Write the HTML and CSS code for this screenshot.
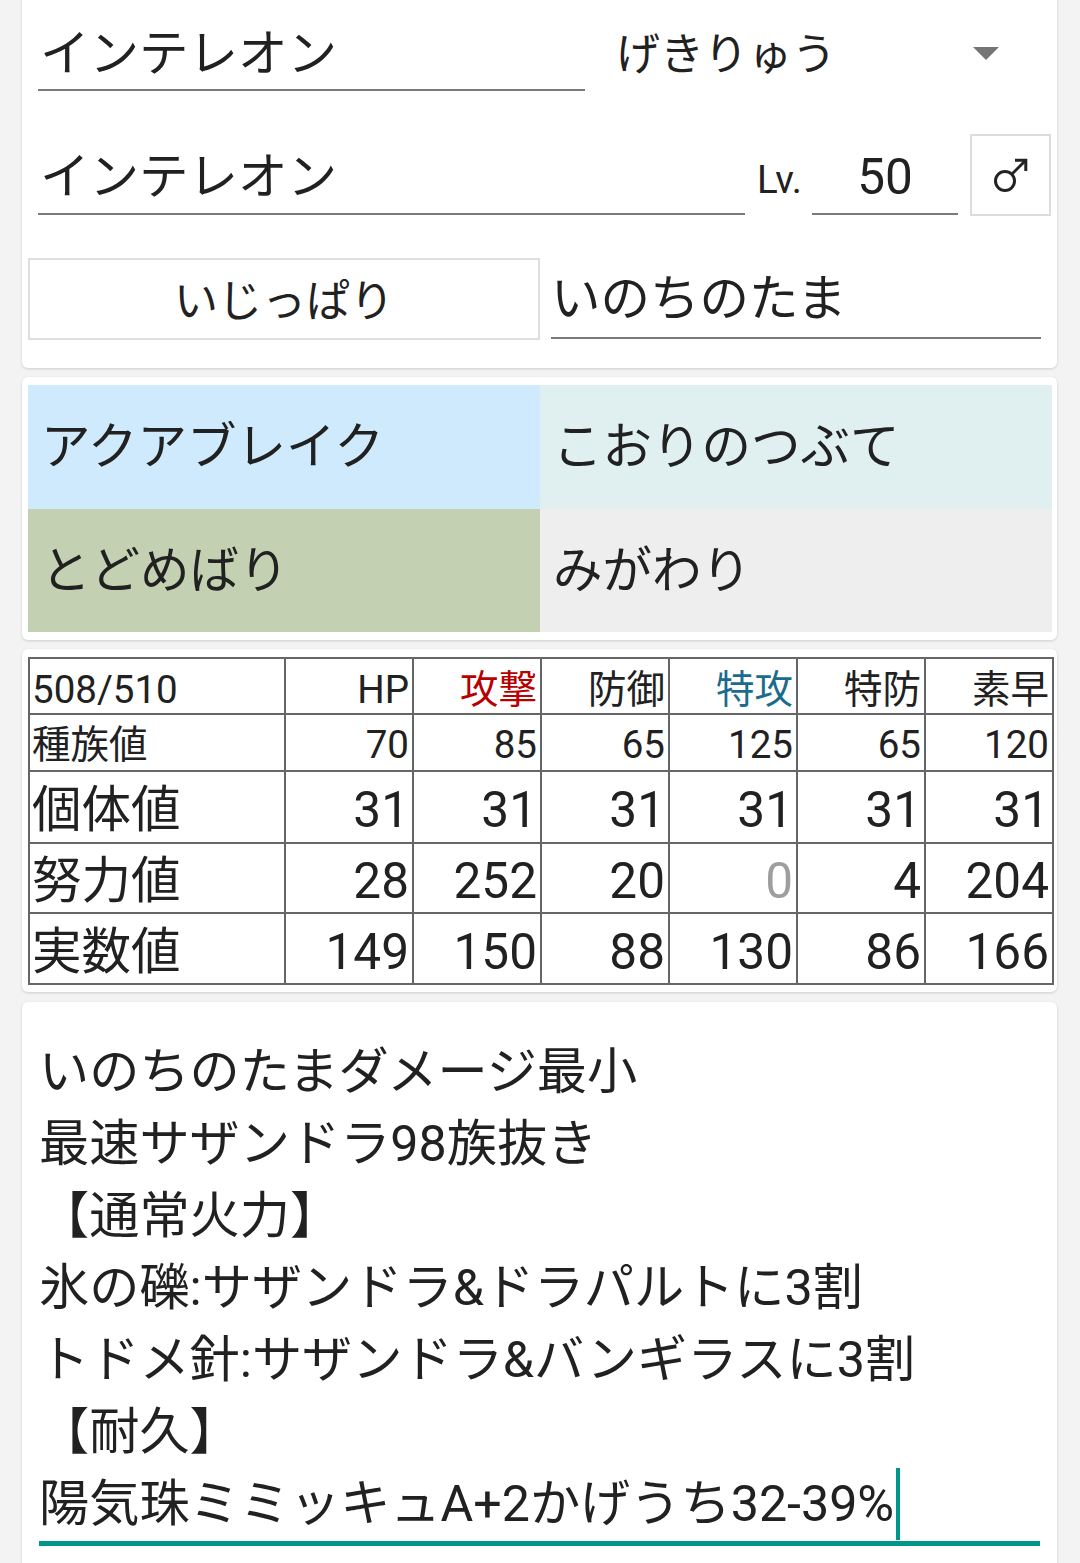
FILE: index.html
```html
<!DOCTYPE html>
<html lang="ja">
<head>
<meta charset="utf-8">
<title>インテレオン</title>
<link rel="stylesheet" href="styles.css">
</head>
<body>
<div class="card card-top">
  <div class="row row1">
    <div class="field name1">インテレオン</div>
    <div class="select">
      <span class="select-text">げきりゅう</span>
      <span class="arrow"></span>
    </div>
  </div>
  <div class="row row2">
    <div class="field name2">インテレオン</div>
    <div class="lv">Lv.</div>
    <div class="field level">50</div>
    <div class="gender">
      <svg width="36" height="36" viewBox="0 0 36 36" fill="none" stroke="#222" stroke-width="3">
        <circle cx="12" cy="24" r="9.5"/>
        <path d="M18.8 17.2 L33 3"/>
        <path d="M22 3.2 H32.8 V14"/>
      </svg>
    </div>
  </div>
  <div class="row row3">
    <div class="nature">いじっぱり</div>
    <div class="field item">いのちのたま</div>
  </div>
</div>

<div class="card card-moves">
  <div class="moves">
    <div class="move m-water">アクアブレイク</div>
    <div class="move m-ice">こおりのつぶて</div>
    <div class="move m-bug">とどめばり</div>
    <div class="move m-normal">みがわり</div>
  </div>
</div>

<div class="card card-stats">
  <table class="stats">
    <colgroup>
      <col class="c-label"><col class="c-num"><col class="c-num"><col class="c-num"><col class="c-num"><col class="c-num"><col class="c-num">
    </colgroup>
    <tr class="r-head">
      <td class="left">508/510</td><td>HP</td><td class="atk">攻撃</td><td>防御</td><td class="spa">特攻</td><td>特防</td><td>素早</td>
    </tr>
    <tr class="r-base">
      <td class="left">種族値</td><td>70</td><td>85</td><td>65</td><td>125</td><td>65</td><td>120</td>
    </tr>
    <tr class="r-big r-iv">
      <td class="left">個体値</td><td>31</td><td>31</td><td>31</td><td>31</td><td>31</td><td>31</td>
    </tr>
    <tr class="r-big r-ev">
      <td class="left">努力値</td><td>28</td><td>252</td><td>20</td><td class="zero">0</td><td>4</td><td>204</td>
    </tr>
    <tr class="r-big r-real">
      <td class="left">実数値</td><td>149</td><td>150</td><td>88</td><td>130</td><td>86</td><td>166</td>
    </tr>
  </table>
</div>

<div class="card card-memo">
  <div class="memo">いのちのたまダメージ最小<br>最速サザンドラ98族抜き<br>【通常火力】<br>氷の礫:サザンドラ&amp;ドラパルトに3割<br>トドメ針:サザンドラ&amp;バンギラスに3割<br>【耐久】<br>陽気珠ミミッキュA+2かげうち32-39%<span class="cursor"></span></div>
</div>
</body>
</html>
```

FILE: styles.css
```css
html, body {
  margin: 0;
  padding: 0;
}
body {
  background: #f3f3f3;
  font-family: Roboto, "Noto Sans CJK JP", sans-serif;
  color: #212121;
  width: 1080px;
  overflow: hidden;
}

.card {
  background: #ffffff;
  margin: 0 23px 0 22px;
  border-radius: 6px;
  box-shadow: 0 1px 3px rgba(0, 0, 0, 0.16);
  box-sizing: border-box;
}

/* ---------- top card ---------- */
.card-top {
  margin-top: -8px;
  padding: 8px 6px 28px 6px;
}
.row {
  display: flex;
  align-items: flex-end;
}
.row1 { height: 91px; }
.row2 { height: 125px; }
.row3 { height: 82px; margin-top: 42px; }

.field {
  font-size: 49.5px;
  line-height: 60px;
  border-bottom: 2.75px solid #7a7a7a;
  padding-left: 2px;
  white-space: nowrap;
  box-sizing: border-box;
}
.name1 {
  margin-left: 10px;
  width: 547px;
  padding-bottom: 5px;
}
.select {
  margin-left: 31px;
  flex: 1;
  display: flex;
  align-items: center;
  justify-content: space-between;
  padding-right: 52px;
  padding-bottom: 6px;
}
.select-text {
  font-size: 44px;
  line-height: 60px;
}
.arrow {
  width: 0;
  height: 0;
  border-left: 13px solid transparent;
  border-right: 13px solid transparent;
  border-top: 13px solid #757575;
  margin-bottom: 3px;
}

.name2 {
  margin-left: 10px;
  width: 707px;
  padding-bottom: 6px;
  margin-bottom: 1px;
}
.lv {
  margin-left: 12px;
  width: 55px;
  font-size: 38.5px;
  line-height: 46px;
  padding-bottom: 13px;
}
.level {
  width: 146px;
  text-align: center;
  padding-left: 0;
  padding-bottom: 6px;
  margin-bottom: 1px;
}
.gender {
  margin-left: 12px;
  width: 81px;
  height: 82px;
  box-sizing: border-box;
  border: 2.75px solid #dcdcdc;
  display: flex;
  align-items: center;
  justify-content: center;
  align-self: flex-end;
}
.gender svg { display: block; }

.nature {
  width: 512px;
  height: 82px;
  box-sizing: border-box;
  border: 2.75px solid #dedede;
  font-size: 44px;
  line-height: 60px;
  display: flex;
  align-items: center;
  justify-content: center;
  padding-top: 6px;
}
.item {
  margin-left: 11px;
  width: 490px;
  padding-left: 0;
  padding-bottom: 8px;
  margin-bottom: 1px;
}

/* ---------- moves card ---------- */
.card-moves {
  margin-top: 9px;
  padding: 8px 5px 8px 6px;
}
.moves {
  display: grid;
  grid-template-columns: 512px 512px;
  grid-template-rows: 124px 123px;
}
.move {
  display: flex;
  align-items: center;
  padding-left: 13px;
  font-size: 49.5px;
  line-height: 60px;
  white-space: nowrap;
}
.m-water { background: #cfeafc; }
.m-ice { background: #e0f0f1; }
.m-bug { background: #c3d0b2; }
.m-normal { background: #eeeeee; }

/* ---------- stats card ---------- */
.card-stats {
  margin-top: 9px;
  padding: 8px 5px 7px 6px;
}
.stats {
  border-collapse: collapse;
  table-layout: fixed;
  width: 1024px;
}
.c-label { width: 256px; }
.c-num { width: 128px; }
.stats td {
  border: 2px solid #666666;
  padding: 0 3px 2px 3px;
  text-align: right;
  vertical-align: bottom;
  white-space: nowrap;
  overflow: hidden;
}
.stats td.left {
  text-align: left;
  padding-left: 2px;
}
.r-head td {
  height: 54px;
  font-size: 38.5px;
  line-height: 46px;
  padding-bottom: 0;
}
.r-base td {
  height: 53px;
  font-size: 38.5px;
  line-height: 46px;
  padding-bottom: 2px;
}
.r-big td {
  font-size: 49.5px;
  line-height: 58px;
}
.r-iv td { height: 67px; padding-bottom: 3px; }
.r-ev td { height: 66px; padding-bottom: 2px; }
.r-real td { height: 67px; padding-bottom: 2px; }
.atk { color: #b80000; }
.spa { color: #1a6b8c; }
.zero { color: #9e9e9e; }

/* ---------- memo card ---------- */
.card-memo {
  margin-top: 10px;
  padding: 34px 17px 40px 17px;
  border-radius: 6px 6px 0 0;
}
.memo {
  font-size: 50.2px;
  line-height: 72px;
  white-space: nowrap;
  padding-bottom: 1px;
  border-bottom: 5.5px solid #009688;
}
.cursor {
  display: inline-block;
  width: 4px;
  height: 72px;
  background: #009688;
  vertical-align: top;
  margin-left: 2px;
}
```
